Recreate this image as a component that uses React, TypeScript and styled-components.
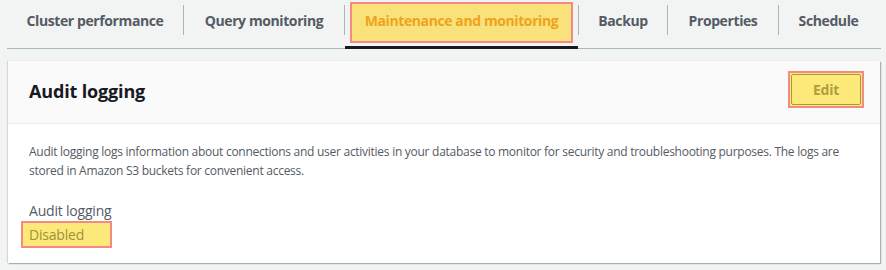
import React from "react";
import styled, { createGlobalStyle } from "styled-components";

const Global = createGlobalStyle`
  html, body { margin: 0; padding: 0; background: #f2f3f3; }
  body { font-family: "Open Sans", "Liberation Sans", sans-serif; }
`;

const Page = styled.div`
  width: 886px;
  height: 270px;
  box-sizing: border-box;
  padding: 0 5px 0 8px;
  background: #f2f3f3;
  display: flex;
  flex-direction: column;
`;

const TabBar = styled.div`
  display: flex;
  align-items: stretch;
  height: 48px;
  border-bottom: 1px solid #aab7b8;
  margin-left: -1px;
`;

const Tab = styled.div<{ $active?: boolean; $w: number }>`
  position: relative;
  width: ${(p) => p.$w}px;
  display: flex;
  align-items: flex-start;
  justify-content: center;
  padding-top: 2px;
  box-sizing: border-box;
  font-size: 14px;
  font-weight: 700;
  letter-spacing: -0.4px;
  color: ${(p) => (p.$active ? "#f0a21a" : "#545b64")};
  ${(p) => p.$active && `border-bottom: 3px solid #16191f; margin-bottom: -1px;`}
`;

const TabLabel = styled.span<{ $hl?: boolean }>`
  display: flex;
  align-items: center;
  justify-content: center;
  height: 38px;
  padding-bottom: 2px;
  box-sizing: border-box;
  ${(p) =>
    p.$hl &&
    `background: #f9e27c; border: 2px solid #f58a85; width: 223px; height: 41px; padding-bottom: 4px;`}
`;

const Sep = styled.div`
  width: 1px;
  background: #aab7b8;
  margin: 5px 0 13px;
`;

const Card = styled.div`
  margin-top: 12px;
  width: 872px;
  background: #fff;
  box-shadow: 1px 1px 1px 0 rgba(0, 28, 36, 0.3), -1px 0 1px 0 rgba(0, 28, 36, 0.12);
  display: flex;
  flex-direction: column;
`;

const CardHeader = styled.div`
  height: 63px;
  background: #fafafa;
  border-bottom: 1px solid #eaeded;
  display: flex;
  align-items: center;
  justify-content: space-between;
  padding: 0 16px 0 21px;
  box-sizing: border-box;
`;

const Title = styled.h2`
  margin: 0 0 2px;
  font-size: 18px;
  font-weight: 700;
  letter-spacing: -0.15px;
  color: #16191f;
`;

const EditHl = styled.div`
  background: #fde97a;
  border: 2px solid #f58a85;
  padding: 1px;
  margin-bottom: 5px;
`;

const EditButton = styled.button`
  width: 70px;
  height: 31px;
  box-sizing: border-box;
  border: 1px solid #a9993c;
  border-radius: 2px;
  background: #fde97a;
  color: #ad9f3e;
  font-family: inherit;
  font-size: 14px;
  font-weight: 700;
  letter-spacing: -0.2px;
  padding: 0;
`;

const CardBody = styled.div`
  padding: 18px 20px 15px 13px;
  display: flex;
  flex-direction: column;
`;

const Desc = styled.p`
  margin: 0 0 0 8px;
  font-size: 12px;
  line-height: 19px;
  letter-spacing: -0.27px;
  color: #545b64;
`;

const Label = styled.div`
  margin: 22px 0 0 8px;
  font-size: 14px;
  line-height: 18px;
  letter-spacing: -0.2px;
  color: #545b64;
`;

const Value = styled.div`
  align-self: flex-start;
  margin-top: 1px;
  width: 91px;
  height: 27px;
  box-sizing: border-box;
  background: #fde97a;
  border: 2px solid #f58a85;
  padding-left: 6px;
  display: flex;
  align-items: center;
  font-size: 14px;
  letter-spacing: -0.2px;
  color: #9d913c;
`;

const tabs = [
  { label: "Cluster performance", w: 176 },
  { label: "Query monitoring", w: 160 },
  { label: "Maintenance and monitoring", w: 233, active: true },
  { label: "Backup", w: 88 },
  { label: "Properties", w: 110 },
  { label: "Schedule", w: 99 },
];

export default function App() {
  return (
    <>
      <Global />
      <Page>
        <TabBar>
          {tabs.map((t, i) => (
            <React.Fragment key={t.label}>
              {i > 0 && <Sep />}
              <Tab $active={t.active} $w={t.w}>
                <TabLabel $hl={t.active}>{t.label}</TabLabel>
              </Tab>
            </React.Fragment>
          ))}
        </TabBar>
        <Card>
          <CardHeader>
            <Title>Audit logging</Title>
            <EditHl>
              <EditButton>Edit</EditButton>
            </EditHl>
          </CardHeader>
          <CardBody>
            <Desc>
              Audit logging logs information about connections and user activities in your database to monitor for
              security and troubleshooting purposes. The logs are stored in Amazon S3 buckets for convenient access.
            </Desc>
            <Label>Audit logging</Label>
            <Value>Disabled</Value>
          </CardBody>
        </Card>
      </Page>
    </>
  );
}
